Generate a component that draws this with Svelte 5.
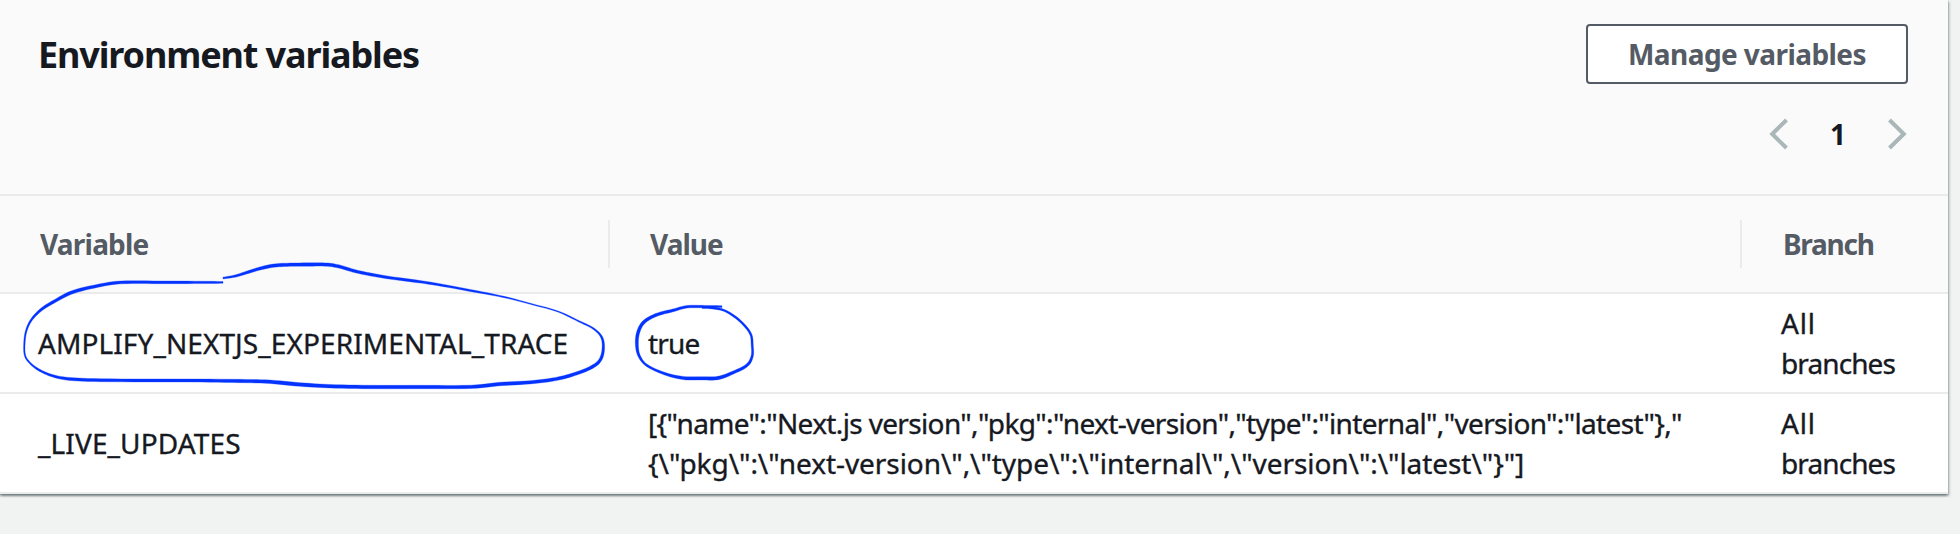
<script>
  const rows = [
    {
      name: 'AMPLIFY_NEXTJS_EXPERIMENTAL_TRACE', nameSpacing: 0.09,
      value: [{ text: 'true', spacing: -0.8 }]
    },
    {
      name: '_LIVE_UPDATES', nameSpacing: 0.12,
      value: [
        { text: '[{"name":"Next.js version","pkg":"next-version","type":"internal","version":"latest"},"', spacing: -0.65 },
        { text: '{\\"pkg\\":\\"next-version\\",\\"type\\":\\"internal\\",\\"version\\":\\"latest\\"}"]', spacing: -0.06 }
      ]
    }
  ];

  // Pen strokes as [x, y, width] samples
  const nameLoop = [
    [223,282.4,1.8],[200,282.4,2.4],[160,282.3,2.7],[121,282.4,2.9],[98,285.8,3],[73,292,3.3],[55,301,3],[42,309,2.7],[32,319,2.1],[26.5,330,1.7],[24.5,342,1.5],
    [24.9,355,1.4],[30,363,1.7],[40,370.5,2],[55,376.5,2.5],[74,379.3,3],[110,380.3,3],[190,380.5,3],[240,381,3.3],[270,381.8,3.5],[300,384.5,3.7],[330,386.2,3.5],
    [370,387,3.5],[420,387,3.4],[471,386.8,3.3],[500,384,3.5],[530,382.3,3.3],[556,379,3.3],[577,373.3,3.2],[592,367,3.2],[600,360.3,3],[603.2,350,2.6],[602,338,2.1],
    [594,329,1.6],[579,321.3,1.4],[558,311.5,1.1],[533,304.5,1.1],[504,297,1.4],[470,290.4,2],[430,283.2,2.4],[387,277.3,2.8],[358,271.9,3],[341,267,3.2],
    [328,264.7,3.3],[310,264.5,3.3],[290,264.7,3.3],[274,265.6,3.3],[260,268.5,3.1],[246,272.8,2.7],[235,276.1,2.3],[223,278.1,1.8]
  ];
  const valueLoop = [
    [722,306.6,1.8],[705,306.6,2.4],[687,306.8,2.6],[673,310.4,2.8],[656,315,3],[643.5,322.5,3.2],[638,333,3.2],[636.9,345,3],[639.2,356,2.5],[647,365.5,2.2],[665,373.8,2.6],
    [683,378,3.2],[701,378.3,3.3],[718,378,3.3],[733,372.6,3],[747,365.3,2.8],[752.2,356,2.3],[752.2,345,2.1],[751,335,2.1],[745,326,2.1],[735,316.8,2.1],[724,310.4,2],[714,308.2,1.9],[702,307.7,1.3]
  ];

  function spline(a, b, c, d, t) {
    return 0.5 * (2 * b + (c - a) * t + (2 * a - 5 * b + 4 * c - d) * t * t + (3 * b - a - 3 * c + d) * t * t * t);
  }

  function outline(pts) {
    const s = [];
    for (let i = 0; i < pts.length - 1; i++) {
      const a = pts[Math.max(i - 1, 0)], b = pts[i], c = pts[i + 1], d = pts[Math.min(i + 2, pts.length - 1)];
      for (let k = 0; k < 6; k++) s.push([0, 1, 2].map((j) => spline(a[j], b[j], c[j], d[j], k / 6)));
    }
    s.push(pts[pts.length - 1]);
    const left = [], right = [];
    s.forEach((p, i) => {
      const q = s[Math.max(i - 1, 0)], r = s[Math.min(i + 1, s.length - 1)];
      const dx = r[0] - q[0], dy = r[1] - q[1], n = Math.hypot(dx, dy) || 1, h = p[2] / 2;
      left.push(`${(p[0] - (dy / n) * h).toFixed(2)} ${(p[1] + (dx / n) * h).toFixed(2)}`);
      right.unshift(`${(p[0] + (dy / n) * h).toFixed(2)} ${(p[1] - (dx / n) * h).toFixed(2)}`);
    });
    return 'M' + [...left, ...right].join('L') + 'Z';
  }
</script>

<main>
  <section class="card">
    <header>
      <h2>Environment variables</h2>
      <div class="tools">
        <button>Manage variables</button>
        <nav>
          <svg width="20" height="32" viewBox="0 0 20 32"><path d="M17.5 2 3.2 16 17.5 30" /></svg>
          <b>1</b>
          <svg width="20" height="32" viewBox="0 0 20 32"><path d="M2.5 2 16.8 16 2.5 30" /></svg>
        </nav>
      </div>
    </header>
    <div class="row head">
      <div class="th variable">Variable</div>
      <div class="th value">Value</div>
      <div class="th branch">Branch</div>
    </div>
    {#each rows as row}
      <div class="row">
        <div class="td"><span style="letter-spacing:{row.nameSpacing}px">{row.name}</span></div>
        <div class="td">
          {#each row.value as line}<span style="letter-spacing:{line.spacing}px">{line.text}</span>{/each}
        </div>
        <div class="td last"><span class="all">All</span><span class="branches">branches</span></div>
      </div>
    {/each}
  </section>
  <svg class="ink" width="1960" height="534" viewBox="0 0 1960 534">
    <path d={outline(nameLoop)} />
    <path d={outline(valueLoop)} />
  </svg>
</main>

<style>
  :global(body) { background: #f1f3f3; overflow: hidden; }
  main { position: relative; height: 534px; font-family: 'Noto Sans', sans-serif; font-size: 28px; line-height: 40px; color: #16191f; overflow: hidden; }
  .card {
    width: 1948px; height: 494px; background: #fff;
    box-shadow: 0 2px 2px 0 rgba(0, 28, 36, .3), 2px 2px 2px 0 rgba(0, 28, 36, .15), -2px 2px 2px 0 rgba(0, 28, 36, .15), 0 0 1px 0 rgba(0, 28, 36, .45);
  }
  header { box-sizing: border-box; height: 196px; padding: 24px 40px 0 38px; display: flex; justify-content: space-between; align-items: flex-start; background: #fafafa; border-bottom: 2px solid #ebebeb; }
  h2 { margin: 9px 0 0; font-size: 36px; line-height: 44px; font-weight: 700; letter-spacing: -1.13px; }
  .tools { display: flex; flex-direction: column; align-items: flex-end; gap: 29px; }
  button { box-sizing: border-box; width: 322px; height: 60px; padding: 0 0 1px; border: 2px solid #545b64; border-radius: 4px; background: #fff; font: 700 28px/40px 'Noto Sans', sans-serif; letter-spacing: -.57px; color: #545b64; }
  nav { display: flex; align-items: center; height: 42px; gap: 41px; padding-right: 1px; }
  nav b { width: 16px; text-align: center; }
  nav svg { display: block; fill: none; stroke: #aab7b8; stroke-width: 4; }
  .row { box-sizing: border-box; display: grid; grid-template-columns: 610px 1132px 1fr; align-items: center; height: 100px; border-bottom: 2px solid #ebebeb; }
  .head { height: 98px; background: #fafafa; color: #545b64; font-weight: 700; }
  .th { box-sizing: border-box; height: 48px; padding: 4px 0 0 40px; border-right: 2px solid #ebebeb; }
  .variable { letter-spacing: -.79px; }
  .value { letter-spacing: -1px; }
  .branch { padding-left: 41px; border-right: 0; letter-spacing: -1.25px; }
  .td { display: flex; flex-direction: column; padding-left: 38px; white-space: nowrap; -webkit-text-stroke: .35px #16191f; }
  .last { padding-left: 39px; }
  .all { letter-spacing: .8px; }
  .branches { letter-spacing: -.9px; }
  .ink { position: absolute; left: 0; top: 0; fill: #0433ff; stroke: #0433ff; stroke-width: .3; pointer-events: none; }
</style>
